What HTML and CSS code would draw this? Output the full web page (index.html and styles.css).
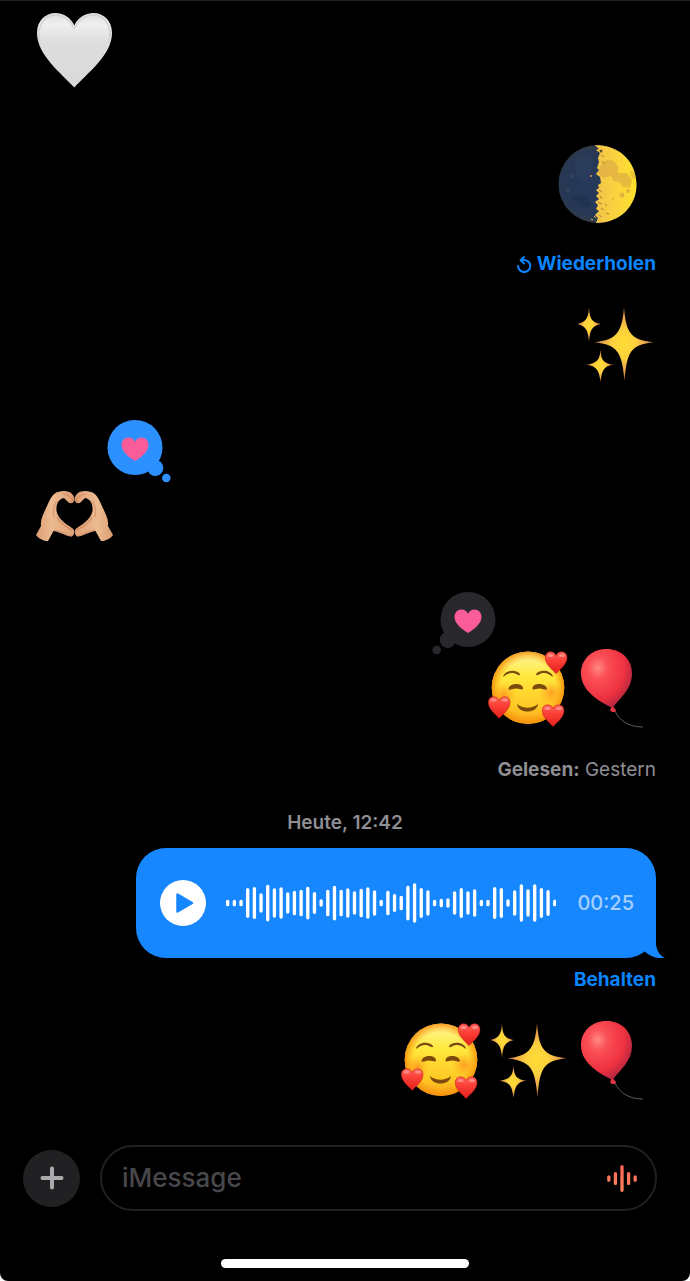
FILE: index.html
```html
<!DOCTYPE html>
<html lang="de">
<head>
  <meta charset="UTF-8">
  <meta name="viewport" content="width=device-width, initial-scale=1">
  <title>Nachrichten</title>
  <link rel="stylesheet" href="styles.css">
</head>
<body>

  <!-- emoji drawings, used by the messages below -->
  <svg class="defs" aria-hidden="true">
    <defs>
      <linearGradient id="whiteFill" x1="0" y1="0" x2="0" y2="1">
        <stop offset="0" stop-color="#dedede"/>
        <stop offset="0.15" stop-color="#efefef"/>
        <stop offset="0.4" stop-color="#dddddd"/>
        <stop offset="1" stop-color="#dadada"/>
      </linearGradient>
      <linearGradient id="redFill" x1="0" y1="0" x2="0" y2="1">
        <stop offset="0" stop-color="#ff665c"/>
        <stop offset="0.4" stop-color="#fb4038"/>
        <stop offset="1" stop-color="#e5201c"/>
      </linearGradient>
      <linearGradient id="faceFill" x1="0" y1="0" x2="0" y2="1">
        <stop offset="0" stop-color="#fff7a0"/>
        <stop offset="0.35" stop-color="#ffe83c"/>
        <stop offset="0.75" stop-color="#ffc925"/>
        <stop offset="1" stop-color="#f9a51b"/>
      </linearGradient>
      <radialGradient id="faceEdge">
        <stop offset="0.75" stop-color="#f99a0c" stop-opacity="0"/>
        <stop offset="1" stop-color="#f58a08" stop-opacity="0.85"/>
      </radialGradient>
      <radialGradient id="cheek">
        <stop offset="0" stop-color="#ff7a1a" stop-opacity="0.6"/>
        <stop offset="1" stop-color="#ff9a1a" stop-opacity="0"/>
      </radialGradient>
      <radialGradient id="balloonFill" cx="0.33" cy="0.32" r="0.75">
        <stop offset="0" stop-color="#ff8a84"/>
        <stop offset="0.25" stop-color="#fb5057"/>
        <stop offset="0.7" stop-color="#ee3140"/>
        <stop offset="1" stop-color="#a92540"/>
      </radialGradient>
      <radialGradient id="starFill">
        <stop offset="0" stop-color="#ffdc35"/>
        <stop offset="0.4" stop-color="#fdd03e"/>
        <stop offset="0.75" stop-color="#e9a04a"/>
        <stop offset="1" stop-color="#a85e2e"/>
      </radialGradient>
      <linearGradient id="moonLight" x1="0" y1="0" x2="1" y2="0">
        <stop offset="0" stop-color="#f3c24a"/>
        <stop offset="0.6" stop-color="#fbd63c"/>
        <stop offset="1" stop-color="#ffe12b"/>
      </linearGradient>
      <radialGradient id="moonDark" gradientUnits="userSpaceOnUse" cx="36" cy="40" r="38">
        <stop offset="0" stop-color="#26395c"/>
        <stop offset="0.85" stop-color="#273854"/>
        <stop offset="1" stop-color="#343c46"/>
      </radialGradient>
      <linearGradient id="skin" x1="0" y1="0" x2="1" y2="0">
        <stop offset="0" stop-color="#dc9d72"/>
        <stop offset="0.4" stop-color="#ecbb91"/>
        <stop offset="1" stop-color="#e0a077"/>
      </linearGradient>
      <linearGradient id="audioFill" gradientUnits="userSpaceOnUse" x1="0" y1="0" x2="0" y2="82">
        <stop offset="0" stop-color="#ff6158"/>
        <stop offset="1" stop-color="#ff8a58"/>
      </linearGradient>
    </defs>

    <symbol id="heartShape" viewBox="0 0 80 80">
      <path d="M40.3 77.5C27 63 3 45 3 23C3 11 11 3 21.500 3C30 3 37 8 40.300 15.500C43.500 8 51 3 59.500 3C70 3 78 11 78 23C78 45 53.500 63 40.300 77.500Z"/>
    </symbol>

    <symbol id="whiteHeart" viewBox="0 0 80 80">
      <use href="#heartShape" width="80" height="80" fill="url(#whiteFill)"/>
      <path d="M6 31C2 17 10 5 21.500 5C30 5 37 11 40.300 18C43.500 11 51 5 59.500 5C71 5 79 17 75 31" fill="none" stroke="#d2d2d2" stroke-width="1.500"/>
    </symbol>

    <symbol id="moon" viewBox="0 0 80 80">
      <circle cx="40.500" cy="40" r="39" fill="url(#moonDark)"/>
      <path d="M19 15C26 7 35 10 37 17C34 26 35 35 28 37C21 36 15 25 19 15Z" fill="#344665" opacity="0.3"/>
      <path d="M15 54C22 49 29 51 34 61C29 66 23 63 15 54Z" fill="#1d2d4c" opacity="0.5"/>
      <circle cx="11" cy="46" r="2" fill="#33435f"/>
      <circle cx="15" cy="32" r="2" fill="#33435f"/>
      <path d="M38 1L42 5L39 6L43 9L41 14L42 18L40 24L42 26L39 30L43 33L44 39L41 41L42 44L39 46L42 49L39 52L42 55L38 58L41 61L39 65L42 67L38 71L41 74L39 79C64 79 80 61 79.500 40C79 16 61 1 38 1Z" fill="url(#moonLight)"/>
      <path d="M43 22L49 16L57 17L61 23L61 29L70 29L75 36L73 44L66 43L62 38L56 37L54 32L46 34L41 29Z" fill="#d9a642" opacity="0.6"/>
      <path d="M73 26L78 29L78 36L74 33Z" fill="#d9a642" opacity="0.5"/>
      <circle cx="65" cy="51" r="2.500" fill="#e6b23c"/>
      <circle cx="71" cy="47" r="2" fill="#e6b23c"/>
      <circle cx="56" cy="55" r="1" fill="#e6b23c"/>
      <circle cx="44" cy="7" r="1.500" fill="#5e502f"/>
      <path d="M44 11l3 2M45 17l2 3M42 46l3 2M43 52l2 3M41 58l4 2M44 64l3 2M42 71l3 2M48 60l2 2M49 69l3 1" stroke="#a9803a" stroke-width="1"/>
      <circle cx="34" cy="32" r="1" fill="#c9a24a"/>
      <path d="M34 75l2 1M37 72l2 2" stroke="#eabb46" stroke-width="1"/>
    </symbol>

    <symbol id="sparkles" viewBox="0 0 80 80">
      <path d="M48 3C50 27 53 36 78 38.300C54 41 51 48 48.500 77C46 48 42 41 18 38.300C42 36 46 27 48 3Z" fill="url(#starFill)"/>
      <path d="M13 3C13.500 14 15 18.500 25 20C15.500 22 14 26 13 38C12 26 10 22 1 20C10 18.500 12.500 14 13 3Z" fill="url(#starFill)"/>
      <path d="M24.500 45C25 56 27 59.500 37.500 60.700C27.500 62 26 66 24.500 78C23 66 21 62 10 60.700C21 59.500 24 56 24.500 45Z" fill="url(#starFill)"/>
    </symbol>

    <symbol id="hand" viewBox="0 0 80 80">
      <path d="M2 59L7 50C6 43 10 37 13 30C16 23 19 17 24 16C29 14.500 35 14.500 38 18C40 20 41 23 40 25C39 27.500 36 28 34 26L30 22C24 23 22 29 22.500 35C24 42 30 47 38 52C41 54 41 58 38 60.500C33 61 27 56 19.500 55L14 65C10 65 5 63 2 59Z" fill="url(#skin)"/>
      <path d="M23 41C26 47 31 50 38 54" fill="none" stroke="#c67c52" stroke-width="1.500" opacity="0.6"/>
      <path d="M20 54C26 54 32 59 38 60" fill="none" stroke="#c67c52" stroke-width="1.500" opacity="0.4"/>
      <path d="M29 18C33 18 36 20 39 24M23 25C19 30 19 36 20 41" fill="none" stroke="#cf8a60" stroke-width="1.500" opacity="0.6"/>
      <path d="M38 22C40 23 39 26 36 26" fill="none" stroke="#c67c52" stroke-width="1"/>
    </symbol>

    <symbol id="heartHands" viewBox="0 0 80 80">
      <use href="#hand" width="80" height="80"/>
      <use href="#hand" width="80" height="80" transform="translate(81 0) scale(-1 1)"/>
    </symbol>

    <symbol id="loveFace" viewBox="0 0 80 80" overflow="visible">
      <circle cx="39" cy="39.700" r="36.300" fill="url(#faceFill)"/>
      <circle cx="39" cy="39.700" r="36.300" fill="url(#faceEdge)"/>
      <circle cx="15" cy="47" r="12" fill="url(#cheek)"/>
      <circle cx="62" cy="45" r="12" fill="url(#cheek)"/>
      <g fill="#7b4a0c">
        <path d="M14 28.500C16 22 27 21 31 26C31.500 27.500 30 27.500 28 26.500C23 24 19 25 15 28.500Z"/>
        <path d="M64 28.500C62 22 51 21 47 26C46.500 27.500 48 27.500 50 26.500C55 24 59 25 63 28.500Z"/>
        <path d="M19.500 41C20 35 33 34 34 40C34 43 31 40.500 27 40.500C23 40.500 20 43 19.500 41Z"/>
        <path d="M58 41C57.500 35 44.500 34 43.500 40C43.500 43 46.500 40.500 50.500 40.500C54.500 40.500 57.500 43 58 41Z"/>
        <path d="M28 56C34 61 43 61 49 56C48 66 29 66 28 56Z"/>
      </g>
      <g fill="url(#redFill)" stroke="#c91b17" stroke-width="2">
        <use href="#heartShape" width="80" height="80" transform="translate(55.400 3) scale(0.290)"/>
        <use href="#heartShape" width="80" height="80" transform="translate(-1.500 47.800) scale(0.290)"/>
        <use href="#heartShape" width="80" height="80" transform="translate(52.400 56) scale(0.290)"/>
      </g>
      <g fill="#ffc4bb" opacity="0.5">
        <ellipse cx="61.500" cy="7.500" rx="3" ry="1.500"/>
        <ellipse cx="73" cy="7.500" rx="3" ry="1.500"/>
        <ellipse cx="4.500" cy="52" rx="3" ry="1.500"/>
        <ellipse cx="16" cy="52" rx="3" ry="1.500"/>
        <ellipse cx="58.500" cy="60.500" rx="3" ry="1.500"/>
        <ellipse cx="70" cy="60.500" rx="3" ry="1.500"/>
      </g>
    </symbol>

    <symbol id="balloon" viewBox="0 0 80 80">
      <path d="M39 63C43 72 52 79 67 79" fill="none" stroke="#5c5c5e" stroke-width="1"/>
      <path d="M36.500 60C26 55 5 44 5 25.500C5 11 16 1 30.500 1C45 1 56 11 56 25.500C56 41 45 49 36.500 60Z" fill="url(#balloonFill)"/>
      <path d="M35.500 59H37.500L40 62L39 64H36L34 62.500Z" fill="#e23342"/>
    </symbol>

    <symbol id="tapback" viewBox="0 0 64 64">
      <circle cx="28" cy="27.500" r="27.500"/>
      <circle cx="48.300" cy="48" r="8"/>
      <circle cx="59.300" cy="58" r="4.300"/>
      <path d="M28 41C23 38 14.500 32 14.500 25C14.500 20.500 17.500 17.500 21.500 17.500C24.500 17.500 27 19 28 22C29 19 31.500 17.500 34.500 17.500C38.500 17.500 41.500 20.500 41.500 25C41.500 32 33 38 28 41Z" fill="#fa5c99"/>
    </symbol>
  </svg>

  <div class="phone">
    <main class="chat">
      <div class="message received first">
        <svg class="emoji" role="img" aria-label="Weißes Herz"><use href="#whiteHeart"/></svg>
      </div>

      <div class="message sent moon">
        <svg class="emoji" role="img" aria-label="Halbmond"><use href="#moon"/></svg>
      </div>
      <button type="button" class="link replay">
        <svg class="replay-icon" viewBox="0 0 15 17" aria-hidden="true">
          <path d="M4 4.200C8 3.200 13.300 5 13.300 10A6.100 6.100 0 0 1 1.100 10" fill="none" stroke="currentColor" stroke-width="2" stroke-linecap="round"/>
          <path d="M7 1L3.600 4.200L7 7.400" fill="none" stroke="currentColor" stroke-width="2" stroke-linecap="round" stroke-linejoin="round"/>
        </svg>
        Wiederholen
      </button>

      <div class="message sent after-note">
        <svg class="emoji" role="img" aria-label="Funkeln"><use href="#sparkles"/></svg>
      </div>

      <div class="message received reacted">
        <svg class="emoji" role="img" aria-label="Herzhände"><use href="#heartHands"/></svg>
        <svg class="tapback mine" role="img" aria-label="Herz-Reaktion"><use href="#tapback"/></svg>
      </div>

      <div class="message sent reacted">
        <svg class="emoji" role="img" aria-label="Verliebtes Gesicht"><use href="#loveFace"/></svg>
        <svg class="emoji" role="img" aria-label="Luftballon"><use href="#balloon"/></svg>
        <svg class="tapback theirs" role="img" aria-label="Herz-Reaktion"><use href="#tapback"/></svg>
      </div>
      <p class="receipt"><b>Gelesen:</b> Gestern</p>

      <p class="timestamp">Heute, 12:42</p>

      <div class="voice">
        <button type="button" class="play" aria-label="Abspielen">
          <svg viewBox="0 0 46 46" aria-hidden="true">
            <path d="M17.500 14.500V31.500L32 23Z" fill="#1787ff" stroke="#1787ff" stroke-width="2.500" stroke-linejoin="round"/>
          </svg>
        </button>
        <svg class="waveform" viewBox="0 0 990 120" aria-hidden="true">
          <path d="M5 55v10M25 55v10M45 55v10M65 20v80M85 17v86M105 36v48M125 10v100M145 21v78M165 18v84M185 33v54M205 28v64M225 25v70M245 16v88M265 32v56M285 54v12M305 25v70M325 13v94M345 25v70M365 21v78M385 30v60M405 22v76M425 18v84M445 27v66M465 55v10M485 28v64M505 38v44M525 43v34M545 13v94M565 6v108M585 20v80M605 27v66M625 55v10M645 52v16M665 51v18M685 30v60M705 20v80M725 30v60M745 24v72M765 55v10M785 55v10M805 17v86M825 20v80M845 54v12M865 27v66M885 9v102M905 24v72M925 9v102M945 20v80M965 26v68M985 55v10"/>
        </svg>
        <span class="duration">00:25</span>
        <svg class="tail" viewBox="0 0 26 28" aria-hidden="true">
          <path d="M17 0V13C17 20 21 26 26 28C17 29 11 26 6 21.700L0 10V0Z"/>
        </svg>
      </div>
      <button type="button" class="link keep">Behalten</button>

      <div class="message sent after-note">
        <svg class="emoji" role="img" aria-label="Verliebtes Gesicht"><use href="#loveFace"/></svg>
        <svg class="emoji" role="img" aria-label="Funkeln"><use href="#sparkles"/></svg>
        <svg class="emoji" role="img" aria-label="Luftballon"><use href="#balloon"/></svg>
      </div>
    </main>

    <form class="composer">
      <button type="button" class="add" aria-label="Hinzufügen">
        <svg viewBox="0 0 24 24" aria-hidden="true">
          <path d="M12 2.500V21.500M2.500 12H21.500" stroke="#aaaaac" stroke-width="4" stroke-linecap="round"/>
        </svg>
      </button>
      <div class="field">
        <input type="text" placeholder="iMessage" aria-label="iMessage">
        <button type="button" class="record" aria-label="Audio aufnehmen">
          <svg viewBox="0 0 90 82" aria-hidden="true">
            <path d="M5 36v10M25 26v30M45 5v72M65 26v30M85 36v10" fill="none" stroke="url(#audioFill)" stroke-width="10" stroke-linecap="round"/>
          </svg>
        </button>
      </div>
    </form>

    <div class="home-bar"></div>
  </div>

</body>
</html>
```
FILE: styles.css
```css
* {
  box-sizing: border-box;
}
body {
  margin: 0;
  background: #fff;
  font-family: Inter, sans-serif;
  font-size: 19px;
  line-height: 24px;
}
button {
  border: 0;
  padding: 0;
  background: none;
  color: inherit;
  font: inherit;
  cursor: pointer;
}
p {
  margin: 0;
}
svg {
  display: block;
}
.defs {
  position: absolute;
  width: 0;
  height: 0;
}
.phone {
  display: flex;
  flex-direction: column;
  min-height: 100vh;
  padding-bottom: 13px;
  background: #000;
  border-top: 1px solid #1c1c1c;
  border-radius: 0 0 8px 8px;
}
.chat {
  display: flex;
  flex-direction: column;
  padding: 9px 34px 0;
}

/* messages */
.message {
  position: relative;
  display: flex;
  gap: 7px;
  margin-top: 54px;
}
.received {
  align-self: flex-start;
}
.sent {
  align-self: flex-end;
}
.first {
  margin-top: 0;
}
.moon {
  margin-right: 19px;
}
.after-note {
  margin-top: 28px;
}
.reacted {
  margin-top: 92px;
}
.emoji {
  width: 80px;
  height: 80px;
  overflow: visible;
}
.tapback {
  position: absolute;
  top: -56px;
  width: 64px;
  height: 64px;
}
.mine {
  left: 73px;
  fill: #2c90ff;
}
.theirs {
  left: -57px;
  fill: #28282c;
  transform: scaleX(-1);
}

/* notes between the messages */
.link {
  align-self: flex-end;
  display: flex;
  align-items: center;
  gap: 5px;
  color: #0a84ff;
  font-weight: 700;
}
.replay {
  margin-top: 28px;
}
.replay-icon {
  width: 15px;
  height: 17px;
}
.keep {
  margin-top: 10px;
}
.receipt {
  align-self: flex-end;
  margin-top: 30px;
  color: #8e8e93;
}
.timestamp {
  margin-top: 29px;
  color: #8e8e93;
  font-weight: 600;
  text-align: center;
}

/* voice message */
.voice {
  position: relative;
  align-self: flex-end;
  display: flex;
  align-items: center;
  width: 100%;
  max-width: 520px;
  height: 110px;
  margin-top: 13px;
  padding: 0 22px 0 24px;
  background: #1787ff;
  border-radius: 30px;
}
.play {
  flex: none;
  width: 46px;
  height: 46px;
  margin-right: 20px;
  background: #fff;
  border-radius: 50%;
}
.waveform {
  flex: 1;
  min-width: 0;
  fill: none;
  stroke: #fff;
  stroke-width: 10;
  stroke-linecap: round;
}
.duration {
  margin-left: 21px;
  color: #a6d0ff;
  font-size: 20px;
  font-weight: 500;
}
.tail {
  position: absolute;
  right: -9px;
  bottom: 0;
  width: 26px;
  height: 28px;
  fill: #1787ff;
}

/* composer */
.composer {
  display: flex;
  align-items: center;
  gap: 20px;
  margin-top: 45px;
  padding: 0 33px 0 23px;
}
.add {
  flex: none;
  display: flex;
  align-items: center;
  justify-content: center;
  width: 57px;
  height: 57px;
  background: #212123;
  border-radius: 50%;
}
.add svg {
  width: 24px;
  height: 24px;
}
.field {
  flex: 1;
  display: flex;
  align-items: center;
  min-width: 0;
  height: 66px;
  padding: 0 18px 0 20px;
  border: 2px solid #212123;
  border-radius: 33px;
}
.field input {
  flex: 1;
  min-width: 0;
  padding: 0;
  border: 0;
  outline: 0;
  background: none;
  color: #fff;
  font: inherit;
  font-size: 26px;
  font-weight: 500;
  line-height: 36px;
}
.field input::placeholder {
  color: #48484c;
  opacity: 1;
}
.record svg {
  width: 30px;
  height: 27px;
}
.home-bar {
  align-self: center;
  width: 36%;
  height: 9px;
  margin-top: 48px;
  background: #fff;
  border-radius: 5px;
}
```
